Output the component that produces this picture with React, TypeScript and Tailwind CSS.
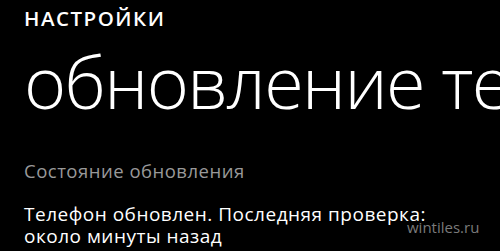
export default function App() {
  return (
    <div
      className="relative w-[500px] h-[251px] overflow-hidden bg-black text-white"
      style={{ fontFamily: '"Open Sans", "Noto Sans", sans-serif' }}
    >
      <div className="flex flex-col pl-6">
        <h1 className="mt-[4px] text-[20.5px] leading-[28px] font-semibold tracking-[1.5px]">
          НАСТРОЙКИ
        </h1>
        <h2 className="mt-[7px] whitespace-nowrap text-[72px] leading-[84px] font-light tracking-[-1.6px]">
          обновление телефона
        </h2>
        <div className="mt-[37px] text-[18.5px] leading-[22px] tracking-[0.5px] text-[#999999]">
          Состояние обновления
        </div>
        <div className="mt-[21px] text-[19px] leading-[22px] tracking-[0.5px]">
          <div>Телефон обновлен. Последняя проверка:</div>
          <div>около минуты назад</div>
        </div>
      </div>
      <span className="absolute left-[407px] top-[216px] text-[15px] text-[#7a7a7a]">
        wintiles.ru
      </span>
    </div>
  );
}
